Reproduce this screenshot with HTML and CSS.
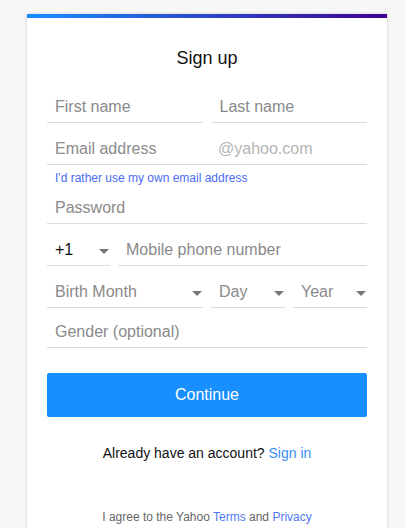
FILE: index.html
```html
<!DOCTYPE html>
<html lang="en">
<head>
  <meta charset="UTF-8" />
  <meta name="viewport" content="width=device-width, initial-scale=1.0"/>
  <title>Sign up</title>
  <link rel="stylesheet" href="styles.css">
</head>
<body>

  <div class="card">
    <h2>Sign up</h2>

    <div class="row names">
      <div class="field"><input type="text" placeholder="First name" /></div>
      <div class="field"><input type="text" placeholder="Last name" /></div>
    </div>

    <div class="field email">
      <input type="text" placeholder="Email address" />
      <span class="suffix">@yahoo.com</span>
    </div>
    <a class="own-email" href="#">I'd rather use my own email address</a>

    <div class="field password"><input type="password" placeholder="Password" /></div>

    <div class="row phone">
      <div class="field select">
        <span class="value">+1</span>
        <svg class="caret" width="10" height="5" viewBox="0 0 10 5"><path d="M0 0h10L5 5z" fill="#777"/></svg>
      </div>
      <div class="field"><input type="tel" placeholder="Mobile phone number" /></div>
    </div>

    <div class="row birth">
      <div class="field select">
        <span>Birth Month</span>
        <svg class="caret" width="10" height="5" viewBox="0 0 10 5"><path d="M0 0h10L5 5z" fill="#777"/></svg>
      </div>
      <div class="field select">
        <span>Day</span>
        <svg class="caret" width="10" height="5" viewBox="0 0 10 5"><path d="M0 0h10L5 5z" fill="#777"/></svg>
      </div>
      <div class="field select">
        <span>Year</span>
        <svg class="caret" width="10" height="5" viewBox="0 0 10 5"><path d="M0 0h10L5 5z" fill="#777"/></svg>
      </div>
    </div>

    <div class="field gender"><input type="text" placeholder="Gender (optional)" /></div>

    <button class="continue">Continue</button>

    <p class="signin">Already have an account? <a href="#">Sign in</a></p>

    <p class="terms">I agree to the Yahoo <a href="#">Terms</a> and <a href="#">Privacy</a></p>
  </div>

</body>
</html>
```

FILE: styles.css
```css
* {
  box-sizing: border-box;
  margin: 0;
  padding: 0;
}

body {
  font-family: "Liberation Sans", Arial, sans-serif;
  background-color: #f7f7f7;
  color: #1d1d1d;
  padding: 14px 0 0 27px;
  overflow: hidden;
}

.card {
  width: 360px;
  min-height: 540px;
  background-color: white;
  border-top: 4px solid transparent;
  border-image: linear-gradient(to right, #188fff, #400090) 1;
  border-image-width: 4px 0 0 0;
  box-shadow: 0 0 3px rgba(0, 0, 0, 0.18);
  padding: 29px 20px 0;
  display: flex;
  flex-direction: column;
}

h2 {
  font-size: 18px;
  font-weight: normal;
  line-height: 22px;
  text-align: center;
  color: #111;
  margin-bottom: 12px;
}

.row {
  display: grid;
  gap: 8px;
}

.names {
  grid-template-columns: 1fr 1fr;
  gap: 9px;
}

.phone {
  grid-template-columns: 63px 1fr;
}

.birth {
  grid-template-columns: 156px 1fr 1fr;
}

.field {
  height: 42px;
  border-bottom: 1px solid #dcdcdc;
  display: flex;
  align-items: flex-end;
  padding: 0 0 5px 8px;
  font-size: 16px;
  line-height: 20px;
  color: #8a8a8a;
}

.field input {
  width: 100%;
  border: none;
  outline: none;
  background: transparent;
  font-family: inherit;
  font-size: 16px;
  line-height: 20px;
  height: 20px;
  padding: 0;
  color: #1d1d1d;
}

.field input::placeholder {
  color: #8a8a8a;
}

.email input {
  width: 163px;
  flex: none;
}

.email .suffix {
  color: #b4b4b4;
}

.password,
.gender {
  height: 40px;
}

.select {
  justify-content: space-between;
  padding-right: 1px;
}

.select .value {
  color: #111;
}

.select .caret {
  margin-bottom: 6px;
}

.own-email {
  font-size: 12px;
  line-height: 12px;
  padding: 7px 0 0 8px;
  color: #4b6cf2;
  text-decoration: none;
}

.continue {
  margin-top: 25px;
  height: 44px;
  background-color: #188fff;
  color: white;
  border: none;
  border-radius: 2px;
  font-family: inherit;
  font-size: 16px;
  cursor: pointer;
}

.signin {
  margin-top: 26px;
  font-size: 14px;
  line-height: 20px;
  text-align: center;
  color: #111;
}

.signin a {
  color: #3b8cf5;
  text-decoration: none;
}

.terms {
  margin-top: 46px;
  font-size: 12px;
  line-height: 16px;
  text-align: center;
  color: #666;
}

.terms a {
  color: #4f78f0;
  text-decoration: none;
}
```
